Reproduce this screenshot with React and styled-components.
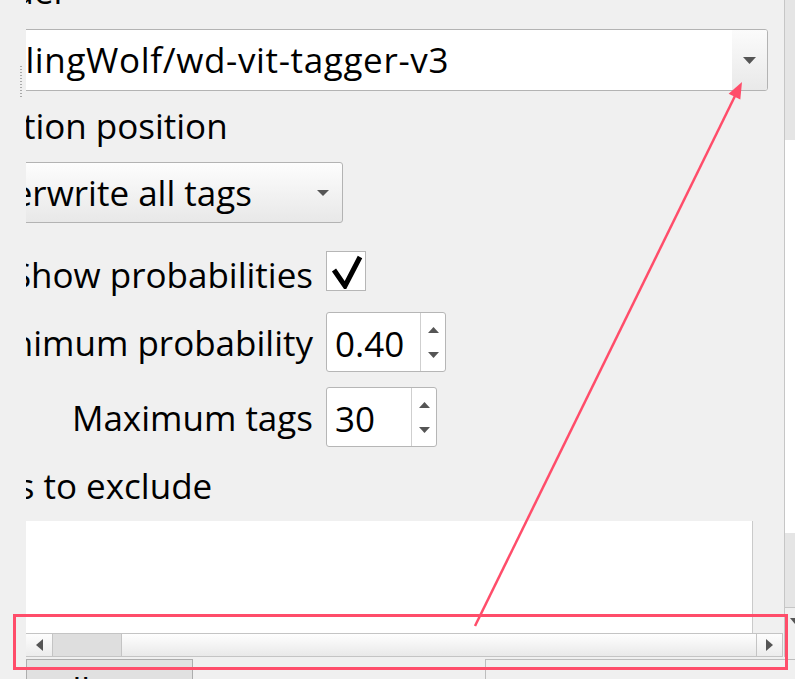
import React from "react";
import styled, { createGlobalStyle } from "styled-components";

const GlobalStyle = createGlobalStyle`
  html, body {
    margin: 0;
    padding: 0;
    background: #f0f0f0;
  }
`;

const Screen = styled.div`
  position: relative;
  width: 795px;
  height: 679px;
  overflow: hidden;
  display: flex;
  flex-direction: column;
  background: #f0f0f0;
  font-family: "Open Sans", "Noto Sans", sans-serif;
  font-size: 35px;
  color: #000;
`;

const TopArea = styled.div`
  height: 657px;
  flex: none;
  display: flex;
`;

const Gutter = styled.div`
  width: 26px;
  flex: none;
  display: flex;
  flex-direction: column;
  align-items: flex-end;
`;

const SplitterDots = styled.div`
  margin-top: 66px;
  margin-right: 4px;
  width: 2px;
  height: 31px;
  background: repeating-linear-gradient(to bottom, #a9a9a9 0 1px, transparent 1px 3px);
`;

const Main = styled.div`
  width: 758px;
  flex: none;
  display: flex;
  flex-direction: column;
`;

const Viewport = styled.div`
  height: 633px;
  flex: none;
  overflow: hidden;
`;

const Content = styled.div`
  margin-left: -66px;
  margin-top: -33px;
  display: flex;
  flex-direction: column;
  align-items: flex-start;
`;

const Label = styled.div`
  height: 48px;
  line-height: 48px;
  white-space: nowrap;
  margin-top: ${(p) => p.$top || 0}px;
  margin-bottom: ${(p) => p.$bottom || 0}px;
`;

const ComboEdit = styled.div`
  width: 808px;
  height: 62px;
  box-sizing: border-box;
  border: 1px solid #b3b3b3;
  border-radius: 3px;
  background: #fff;
  display: flex;
  align-items: center;
`;

const ComboText = styled.div`
  flex: 1;
  padding-left: ${(p) => p.$pad ?? 7}px;
  line-height: 48px;
  white-space: nowrap;
  letter-spacing: ${(p) => p.$spacing || 0}px;
`;

const DropButton = styled.div`
  width: 35px;
  align-self: stretch;
  display: flex;
  align-items: center;
  justify-content: center;
  background: linear-gradient(#fbfbfb, #e9e9e9);
  border-radius: 0 2px 2px 0;
`;

const ComboButton = styled.div`
  margin-top: 12px;
  width: 383px;
  height: 61px;
  box-sizing: border-box;
  border: 1px solid #b3b3b3;
  border-radius: 3px;
  background: linear-gradient(#fdfdfd, #e8e8e8);
  display: flex;
  align-items: center;
`;

const ComboArrowBox = styled.div`
  width: 38px;
  display: flex;
  justify-content: center;
`;

const FormRow = styled.div`
  display: flex;
  align-items: ${(p) => p.$align || "center"};
  gap: 13px;
  margin-top: ${(p) => p.$top}px;
  height: ${(p) => p.$height}px;
`;

const FormLabel = styled.div`
  width: 353px;
  text-align: right;
  line-height: 48px;
  white-space: nowrap;
  padding-top: ${(p) => p.$pad || 0}px;
`;

const CheckBox = styled.div`
  width: 40px;
  height: 40px;
  box-sizing: border-box;
  border: 1px solid #b6b6b6;
  background: #fff;
  display: flex;
  align-items: center;
  justify-content: center;
`;

const SpinBox = styled.div`
  width: ${(p) => p.$width}px;
  height: 60px;
  box-sizing: border-box;
  border: 1px solid #b6b6b6;
  border-radius: 3px;
  background: #fff;
  display: flex;
`;

const SpinValue = styled.div`
  flex: 1;
  padding-left: 8px;
  line-height: 58px;
  padding-top: 2px;
`;

const SpinButtons = styled.div`
  width: 24px;
  border-left: 1px solid #cfcfcf;
  display: flex;
  flex-direction: column;
  align-items: center;
  justify-content: center;
  gap: 19px;
`;

const TextArea = styled.div`
  margin-top: 11px;
  width: 792px;
  height: 200px;
  background: #fff;
  border-right: 1px solid #cacaca;
`;

const HScroll = styled.div`
  width: 757px;
  height: 24px;
  box-sizing: border-box;
  border-top: 1px solid #c4c4c4;
  border-bottom: 1px solid #c4c4c4;
  display: flex;
`;

const ScrollArrow = styled.div`
  width: ${(p) => p.$width}px;
  flex: none;
  display: flex;
  align-items: center;
  justify-content: center;
  background: linear-gradient(#fdfdfd, #ececec);
  border-left: ${(p) => (p.$edge ? "1px solid #c4c4c4" : "none")};
  border-right: 1px solid #c4c4c4;
`;

const Handle = styled.div`
  width: 68px;
  flex: none;
  background: #dedede;
  border-right: 1px solid #c4c4c4;
`;

const Track = styled.div`
  flex: 1;
  background: linear-gradient(#fefefe, #e9e9e9);
`;

const VScroll = styled.div`
  width: 10px;
  flex: none;
  border-left: 1px solid #c6c6c6;
  display: flex;
  flex-direction: column;
`;

const VPart = styled.div`
  height: ${(p) => p.$h}px;
  flex: none;
  background: ${(p) => p.$bg};
  border-bottom: ${(p) => (p.$line ? "1px solid #c6c6c6" : "none")};
`;

const VArrow = styled.div`
  flex: 1;
  padding-top: 10px;
  padding-left: 5px;
`;

const BottomRow = styled.div`
  height: 22px;
  flex: none;
  display: flex;
  padding-left: 26px;
`;

const PushButton = styled.div`
  margin-top: 2px;
  width: 167px;
  height: 40px;
  box-sizing: border-box;
  border: 1px solid #adadad;
  background: #e1e1e1;
  padding: 6px 0 0 26px;
  line-height: 48px;
  white-space: nowrap;
`;

const Frame = styled.div`
  margin-top: 2px;
  margin-left: 292px;
  flex: 1;
  border-top: 1px solid #bdbdbd;
  border-left: 1px solid #bdbdbd;
`;

const Overlay = styled.svg`
  position: absolute;
  left: 0;
  top: 0;
  pointer-events: none;
`;

const Tri = ({ dir, w, h, color = "#555" }) => {
  const pts = {
    down: `0,0 ${w},0 ${w / 2},${h}`,
    up: `0,${h} ${w},${h} ${w / 2},0`,
    left: `${w},0 ${w},${h} 0,${h / 2}`,
    right: `0,0 ${w},${h / 2} 0,${h}`,
  }[dir];
  return (
    <svg width={w} height={h} viewBox={`0 0 ${w} ${h}`} style={{ display: "block", flex: "none" }}>
      <polygon points={pts} fill={color} />
    </svg>
  );
};

function App() {
  return (
    <Screen>
      <GlobalStyle />
      <TopArea>
        <Gutter>
          <SplitterDots />
        </Gutter>
        <Main>
          <Viewport>
            <Content>
              <Label $bottom={14}>Model</Label>
              <ComboEdit>
                <ComboText $pad={2} $spacing={0.65}>SmilingWolf/wd-vit-tagger-v3</ComboText>
                <DropButton>
                  <Tri dir="down" w={13} h={7} />
                </DropButton>
              </ComboEdit>
              <Label $top={11}>Caption position</Label>
              <ComboButton>
                <ComboText>Overwrite all tags</ComboText>
                <ComboArrowBox>
                  <Tri dir="down" w={12} h={6} />
                </ComboArrowBox>
              </ComboButton>
              <FormRow $top={28} $height={48} $align="flex-start">
                <FormLabel>Show probabilities</FormLabel>
                <CheckBox>
                  <svg width="34" height="36" viewBox="0 0 34 36">
                    <path d="M5 17 L16 33 L31 4" fill="none" stroke="#000" strokeWidth="5" strokeLinejoin="miter" />
                  </svg>
                </CheckBox>
              </FormRow>
              <FormRow $top={13} $height={60}>
                <FormLabel $pad={1}>Minimum probability</FormLabel>
                <SpinBox $width={120}>
                  <SpinValue>0.40</SpinValue>
                  <SpinButtons>
                    <Tri dir="up" w={11} h={6} />
                    <Tri dir="down" w={11} h={6} />
                  </SpinButtons>
                </SpinBox>
              </FormRow>
              <FormRow $top={15} $height={60}>
                <FormLabel $pad={1}>Maximum tags</FormLabel>
                <SpinBox $width={111}>
                  <SpinValue>30</SpinValue>
                  <SpinButtons>
                    <Tri dir="up" w={11} h={6} />
                    <Tri dir="down" w={11} h={6} />
                  </SpinButtons>
                </SpinBox>
              </FormRow>
              <Label $top={15}>Tags to exclude</Label>
              <TextArea />
            </Content>
          </Viewport>
          <HScroll>
            <ScrollArrow $width={26}>
              <Tri dir="left" w={7} h={12} />
            </ScrollArrow>
            <Handle />
            <Track />
            <ScrollArrow $width={25} $edge>
              <Tri dir="right" w={7} h={12} />
            </ScrollArrow>
          </HScroll>
        </Main>
        <VScroll>
          <VPart $h={140} $bg="#e5e5e5" />
          <VPart $h={393} $bg="#ffffff" />
          <VPart $h={74} $bg="#e5e5e5" $line />
          <VArrow>
            <Tri dir="down" w={10} h={6} />
          </VArrow>
        </VScroll>
      </TopArea>
      <BottomRow>
        <PushButton>all</PushButton>
        <Frame />
      </BottomRow>
      <Overlay width="795" height="679" viewBox="0 0 795 679">
        <rect x="14.5" y="615.5" width="772" height="53" fill="none" stroke="#ff4d6a" strokeWidth="3" />
        <line x1="475" y1="626" x2="735" y2="96" stroke="#ff4d6a" strokeWidth="2.5" />
        <polygon points="742,82 740.3,99.6 728.6,93.8" fill="#ff4d6a" />
      </Overlay>
    </Screen>
  );
}

export default App;
